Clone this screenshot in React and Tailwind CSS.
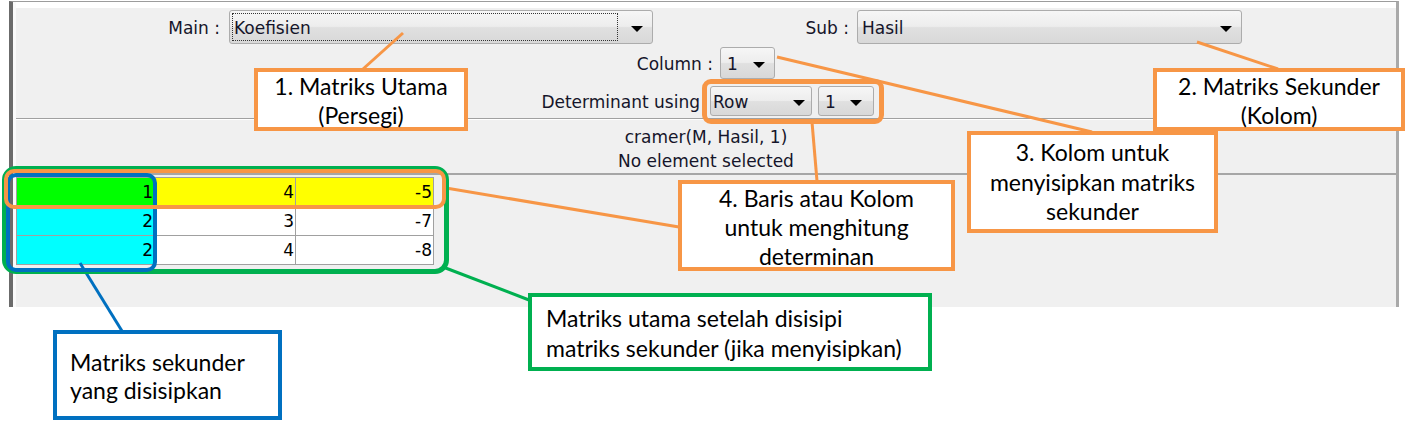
import React from "react";

const MATRIX = [
  [["1", "bg-[#00ff00]"], ["4", "bg-[#ffff00]"], ["-5", "bg-[#ffff00]"]],
  [["2", "bg-[#00ffff]"], ["3", "bg-white"], ["-7", "bg-white"]],
  [["2", "bg-[#00ffff]"], ["4", "bg-white"], ["-8", "bg-white"]],
];

export default function App() {
  return (
    <div className="relative h-[423px] w-[1408px] overflow-hidden bg-white font-['DejaVu_Sans',sans-serif] text-[17px] text-[#15152a]">
      <Panel />
      <Annotations />
    </div>
  );
}

function Combo({ className, arrow, pad, focus, children }) {
  return (
    <div
      className={`flex items-center rounded-[3px] border border-[#acacac] bg-[linear-gradient(to_bottom,#f6f6f6_0%,#ededed_48%,#e0e0e0_52%,#d8d8d8_100%)] ${className}`}
    >
      {focus ? (
        <span className="my-[2px] ml-[2px] flex w-[386px] items-center self-stretch border border-dotted border-[#333] pl-px pt-[3px]">
          {children}
        </span>
      ) : (
        <span className={`pt-[3px] ${pad}`}>{children}</span>
      )}
      <span
        className={`ml-auto mt-[4px] h-0 w-0 border-x-[6px] border-t-[6px] border-x-transparent border-t-black ${arrow}`}
      />
    </div>
  );
}

function Panel() {
  return (
    <div className="ml-[9px] mt-px flex h-[306px] w-[1390px] flex-col border-t border-r-[3px] border-l-4 border-[#9c9c9c] border-l-[#6b6b6b] border-r-[#a9a9a9]">
      <div className="flex flex-1 flex-col border-l-[3px] border-l-[#fafafa] bg-[#f0f0f0]">
        {/* selectors */}
        <div className="flex h-[116px] flex-col border-t-[6px] border-t-white">
          <div className="mt-[2px] flex h-[34px] items-center">
            <span className="w-[204px] pt-[3px] text-right">Main :</span>
            <Combo className="ml-[9px] h-[34px] w-[424px]" arrow="mr-[9px]" focus>
              Koefisien
            </Combo>
            <span className="w-[196px] pt-[3px] text-right">Sub :</span>
            <Combo className="ml-[8px] h-[34px] w-[385px]" arrow="mr-[9px]" pad="pl-[4px]">
              Hasil
            </Combo>
          </div>
          <div className="mt-[3px] flex h-[32px] items-center">
            <span className="w-[697px] pt-[4px] text-right">Column :</span>
            <Combo className="ml-[7px] h-[32px] w-[55px]" arrow="mr-[9px]" pad="pl-[6px]">
              1
            </Combo>
          </div>
          <div className="mt-[7px] flex h-[30px] items-center">
            <span className="w-[684px] pt-[3px] text-right">Determinant using</span>
            <Combo className="ml-[10px] h-[30px] w-[102px]" arrow="mr-[6px]" pad="pl-[2px]">
              Row
            </Combo>
            <Combo className="ml-[6px] h-[30px] w-[56px]" arrow="mr-[11px]" pad="pl-[6px]">
              1
            </Combo>
          </div>
        </div>
        <div className="h-[2px] border-t border-[#a0a0a0] bg-white" />

        {/* status */}
        <div className="h-[53px] pt-[5px] text-center leading-[24px]">
          <p>cramer(M, Hasil, 1)</p>
          <p>No element selected</p>
        </div>
        <div className="h-[2px] bg-[#a6a6a6]" />

        {/* matrix */}
        <div className="flex-1 pt-[2px]">
          <div className="grid w-fit grid-cols-[138px_141px_138px] border-t border-l border-[#a0a0a0]">
            {MATRIX.flat().map(([v, bg], i) => (
              <div
                key={i}
                className={`flex h-[29px] items-center justify-end border-r border-b border-[#a0a0a0] pr-px pt-px text-black ${bg}`}
              >
                {v}
              </div>
            ))}
          </div>
        </div>
      </div>
    </div>
  );
}

function Callout({ className, lines }) {
  return (
    <div
      className={`absolute border-4 bg-white font-['Lato',sans-serif] text-[23px] text-black ${className}`}
    >
      {lines.map((l) => (
        <p key={l}>{l}</p>
      ))}
    </div>
  );
}

function Annotations() {
  return (
    <>
      <svg className="pointer-events-none absolute inset-0" width="1408" height="423">
        <g strokeWidth="3">
          <line x1="363" y1="69" x2="403" y2="33" stroke="#f79646" />
          <line x1="1197" y1="42" x2="1278" y2="69" stroke="#f79646" />
          <line x1="777" y1="57" x2="1092" y2="132" stroke="#f79646" />
          <line x1="812" y1="122" x2="817" y2="181" stroke="#f79646" />
          <line x1="446" y1="188" x2="679" y2="227" stroke="#f79646" />
          <line x1="443" y1="267" x2="529" y2="300" stroke="#00b050" />
          <line x1="80" y1="263" x2="122" y2="331" stroke="#0070c0" />
        </g>
      </svg>

      {/* highlights */}
      <div className="absolute left-[702px] top-[79px] h-[45px] w-[182px] rounded-[9px] border-[5px] border-[#f79646]" />
      <div className="absolute left-[2px] top-[166px] h-[108px] w-[447px] rounded-[14px] border-[5px] border-[#00b050]" />
      <div className="absolute left-[6px] top-[173px] h-[99px] w-[151px] rounded-[10px] border-4 border-[#0070c0]" />
      <div className="absolute left-[4px] top-[169px] h-[40px] w-[442px] rounded-[10px] border-4 border-[#f79646]" />

      {/* callouts */}
      <Callout
        className="left-[254px] top-[68px] h-[63px] w-[214px] border-[#f79646] text-center leading-[29px]"
        lines={["1. Matriks Utama", "(Persegi)"]}
      />
      <Callout
        className="left-[1153px] top-[68px] h-[63px] w-[252px] border-[#f79646] text-center leading-[29px]"
        lines={["2. Matriks Sekunder", "(Kolom)"]}
      />
      <Callout
        className="left-[967px] top-[131px] h-[102px] w-[251px] border-[#f79646] pt-[3px] text-center leading-[29.5px]"
        lines={["3. Kolom untuk", "menyisipkan matriks", "sekunder"]}
      />
      <Callout
        className="left-[678px] top-[180px] h-[91px] w-[277px] border-[#f79646] text-center leading-[29px]"
        lines={["4. Baris atau Kolom", "untuk menghitung", "determinan"]}
      />
      <Callout
        className="left-[528px] top-[293px] h-[78px] w-[404px] border-[#00b050] pl-[14px] pt-[6px] leading-[30px]"
        lines={["Matriks utama setelah disisipi", "matriks sekunder (jika menyisipkan)"]}
      />
      <Callout
        className="left-[53px] top-[330px] h-[90px] w-[229px] border-[#0070c0] pl-[13px] pt-[14px] leading-[28px]"
        lines={["Matriks sekunder", "yang disisipkan"]}
      />
    </>
  );
}
